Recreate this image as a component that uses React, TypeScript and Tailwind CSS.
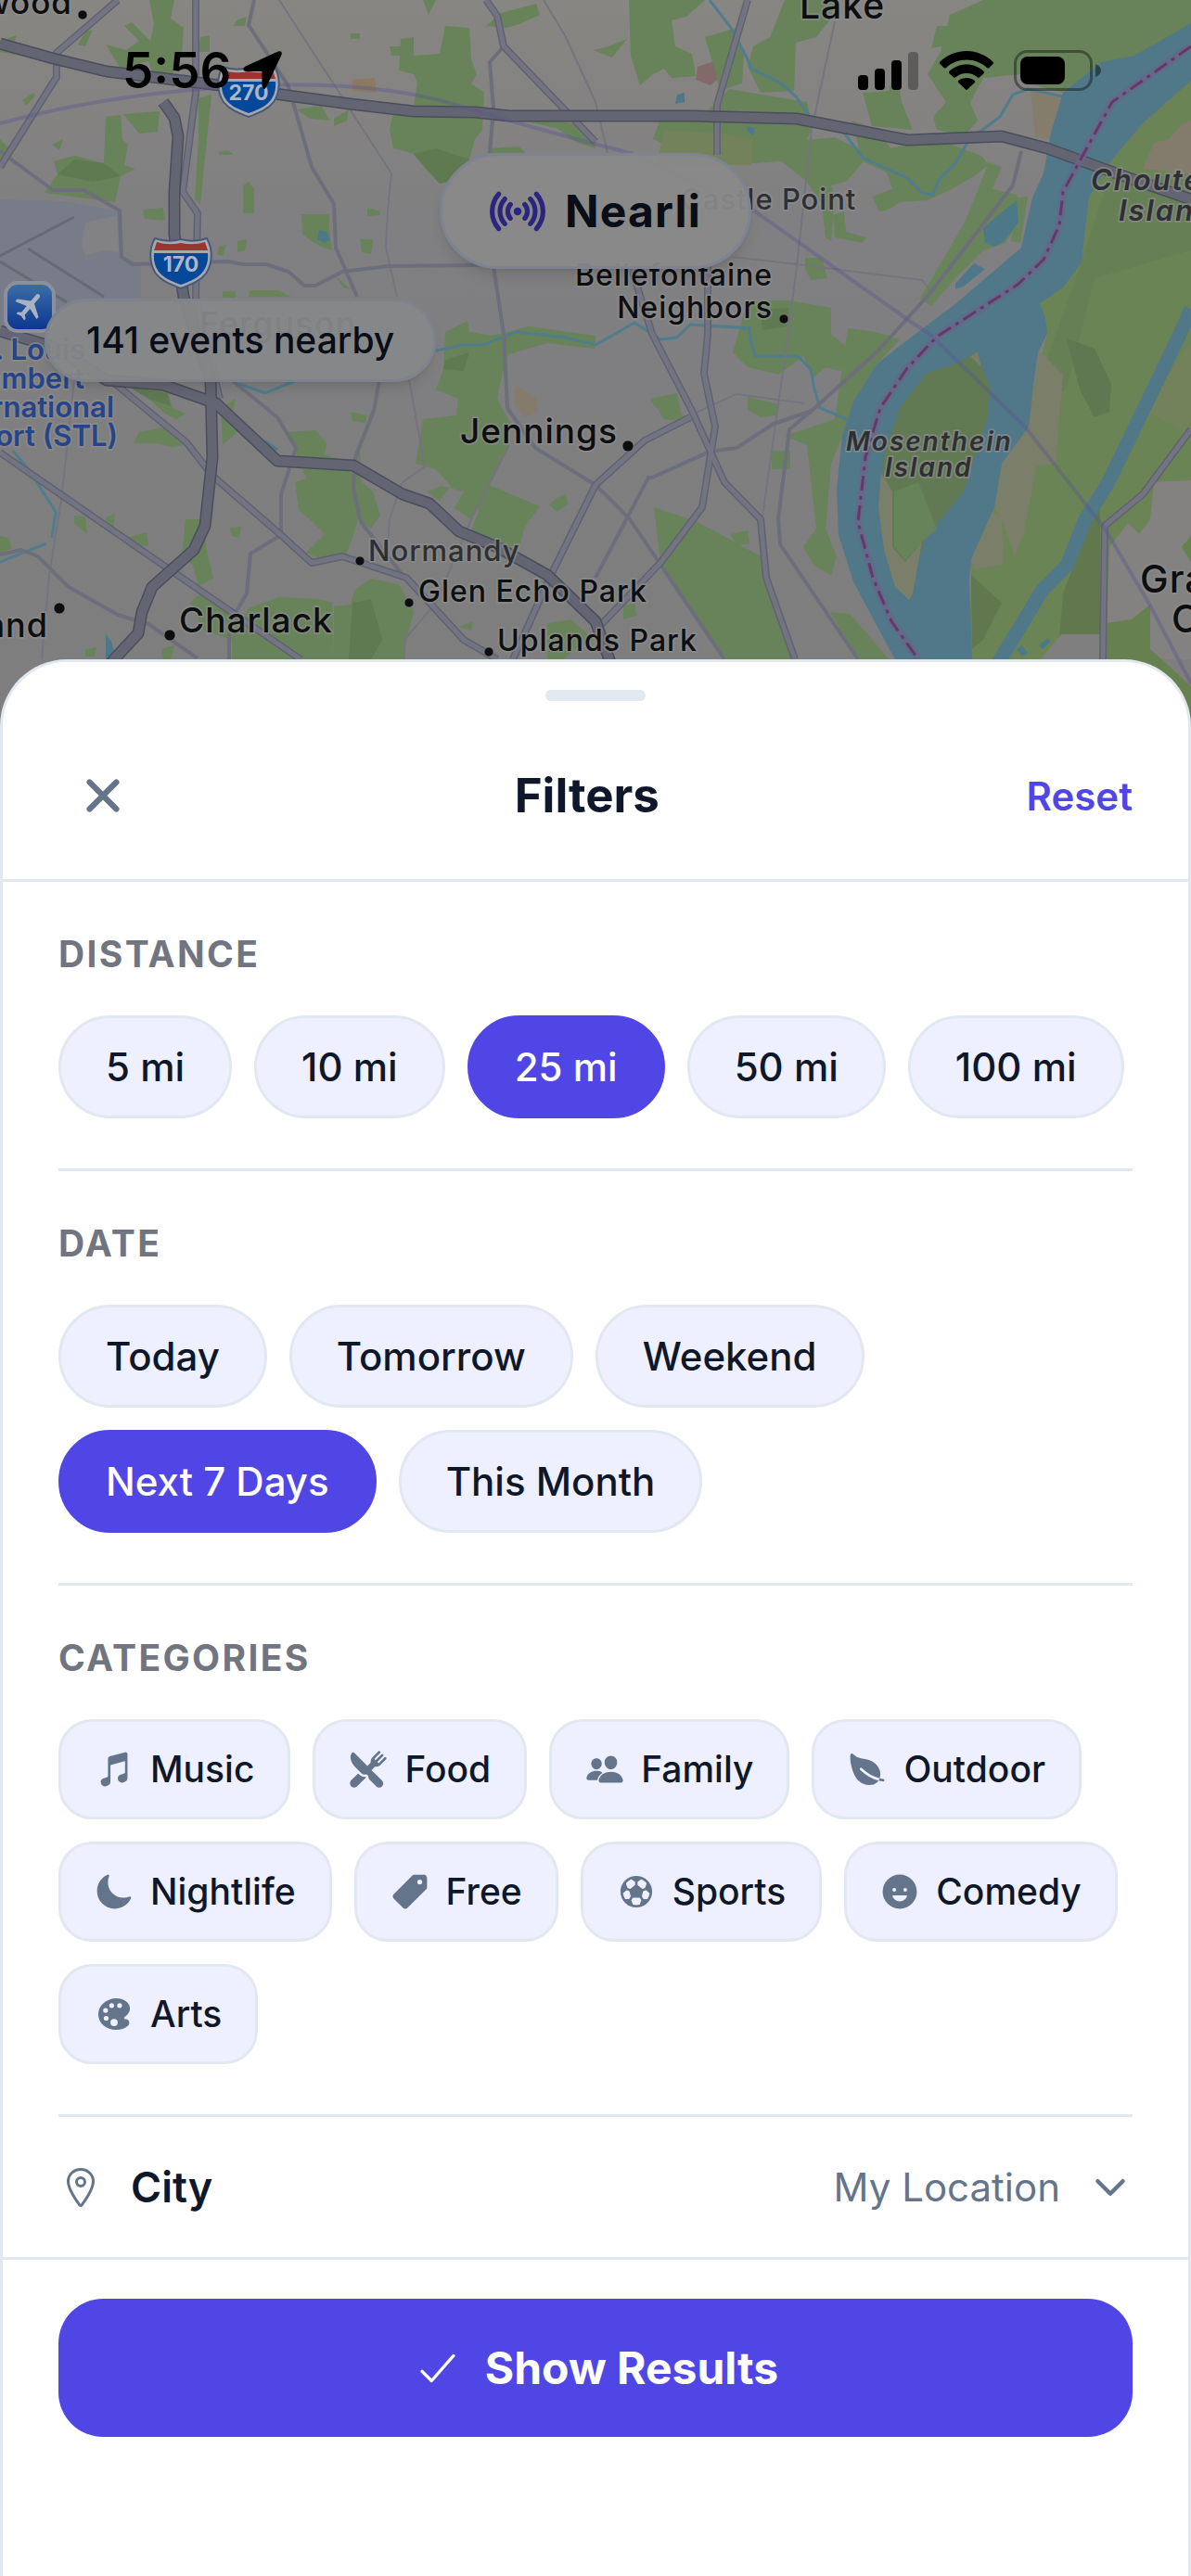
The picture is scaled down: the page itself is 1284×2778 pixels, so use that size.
import { useState } from "react";
import type { ReactNode } from "react";
import type { IconType } from "react-icons";
import {
  IoCheckmarkOutline,
  IoChevronDown,
  IoClose,
  IoColorPalette,
  IoFootball,
  IoHappy,
  IoLeaf,
  IoLocationOutline,
  IoMoon,
  IoMusicalNotes,
  IoPeople,
  IoPricetag,
  IoRadio,
  IoRestaurant,
} from "react-icons/io5";
import { MdFlight } from "react-icons/md";

const DISTANCES = ["5 mi", "10 mi", "25 mi", "50 mi", "100 mi"];
const DATES = ["Today", "Tomorrow", "Weekend", "Next 7 Days", "This Month"];
const CATEGORIES: { name: string; icon: IconType }[] = [
  { name: "Music", icon: IoMusicalNotes },
  { name: "Food", icon: IoRestaurant },
  { name: "Family", icon: IoPeople },
  { name: "Outdoor", icon: IoLeaf },
  { name: "Nightlife", icon: IoMoon },
  { name: "Free", icon: IoPricetag },
  { name: "Sports", icon: IoFootball },
  { name: "Comedy", icon: IoHappy },
  { name: "Arts", icon: IoColorPalette },
];

const HIGHWAYS = [
  "M0 47 57 63 115 77 237 92 303 102 377 112 446 120 512 121 549 125 748 125 859 128 978 151 1080 147 1129 160 1220 193 1284 215",
  "M176 110 188 127 192 147 188 207 188 253 198 320 227 410 229 493 221 567 209 593 164 633 153 660 149 683 123 711 90 760",
  "M0 357 60 375 115 410 176 415 233 435 299 497 381 502 434 533 463 543 495 573 536 590 590 620 642 670 660 720",
];

const ROADS = [
  "M127 0 61 57 61 83 0 180",
  "M211 0V100L197 207 213 230 211 320 237 430",
  "M524 0 536 17 543 50 642 153",
  "M806 0 773 113V167",
  "M763 287 763 360 759 403 771 460 757 547 712 607 642 680",
  "M680 287 703 360 746 443 781 520 820 560 826 623 857 711",
  "M0 488 152 593 324 711",
  "M123 413 201 477 229 513 303 577 336 607 369 600 438 623 500 690 536 711",
  "M744 450 695 475 642 523 594 620 553 711",
  "M1284 463 1232 533 1191 567 1189 711",
];

const STREETS = [
  "M274 0 268 27 311 93 336 180 360 220 362 267 385 320",
  "M409 410 403 443 383 493 381 527 389 563 434 620",
  "M0 163 57 205 90 205 129 227 131 277 143 285 246 282 262 285 287 285 311 293 328 308 340 308 369 293 418 287 516 286",
  "M543 50 528 67 532 117 528 165",
  "M532 287 543 360 547 440 577 483 642 523 679 560 781 711",
  "M250 410 299 450 319 483 303 533V577L270 597 266 640 247 673V711",
  "M1101 163 1092 200 1002 317 945 380 875 443 851 463 839 560 841 587 925 711",
  "M875 443 834 457 794 483 765 487 703 515 699 515 642 623",
  "M0 598 23 593 41 600 74 633 127 663 160 673 213 710",
];

const LANES = [
  "M301 0 422 187 418 227 416 267 428 320",
  "M441 410 458 503 434 520 420 560 418 590",
  "M586 0 610 40 642 110 655 165",
  "M789 277 859 285 994 302 1004 315",
  "M900 23 875 140 859 287 847 380 822 557",
  "M744 448 794 425 867 435",
  "M80 410 66 540 53 620 45 711",
  "M549 480 508 560 470 650 436 690V711",
];

const PARKS = [
  "M161 0H188L184 20 198 30 196 60 188 76 180 92 168 88 160 66 130 74 114 48 136 54 150 44 134 28 142 24 162 44 166 26Z",
  "M0 44 18 38 14 50 34 62 0 56Z",
  "M92 34 100 32 92 50 84 48Z",
  "M216 40 226 38V56H214Z",
  "M214 106 228 102 222 160 216 220 210 214 214 150Z",
  "M133 123 172 120 170 142 150 144Z",
  "M114 126 130 124 132 150 138 156 134 178 146 182 130 190 124 218 48 208 62 188 58 174 80 168 112 176Z",
  "M24 108 36 100 38 104 28 114Z",
  "M56 156 68 150 64 162Z",
  "M0 150 10 160 0 172Z",
  "M255 22 266 18 264 28 252 28Z",
  "M378 36H388V42H378Z",
  "M320 118 346 114 356 130 334 128Z",
  "M360 128 376 118 374 130 360 136Z",
  "M456 0H470L462 16Z",
  "M480 28 506 30 508 64 514 80 508 90 522 100 520 140 512 150 506 172 482 196 474 198 460 184 446 166 424 160 420 140 424 120 444 126 446 114 450 90 446 80 430 76 432 42 446 40 446 60 474 58Z",
  "M524 28 540 14 578 4 582 16 560 26 546 30Z",
  "M420 50H436V60H422Z",
  "M562 130 590 128 620 134 642 148V160L622 154 600 138Z",
  "M528 160 560 158 566 165H530Z",
  "M262 200 268 196 274 204V230H262Z",
  "M236 164 246 162 252 167H236Z",
  "M325 231H355V248L358 270 346 266 336 260 326 252Z",
  "M388 258H402L400 274 390 272Z",
  "M396 224 410 228V232L396 233Z",
  "M256 260 266 258 264 270 256 272Z",
  "M236 266 244 264 240 276 234 274Z",
  "M154 226 176 224 178 238 156 236Z",
  "M240 314H254V321H240Z",
  "M270 313H300L314 320H268Z",
  "M362 298 378 312 370 310Z",
  "M480 358 504 346 506 358 530 362 570 352 642 362V376L590 370 548 382 540 410 536 430 550 456 548 482 508 560 490 548 500 530 476 524 460 530 474 540 486 524 470 506 448 500 456 452 492 448 494 430 470 420 478 398Z",
  "M520 520 582 546 566 568 560 590 522 586 506 578 515 554Z",
  "M602 536 610 532 612 544 600 552 592 544Z",
  "M140 412 180 420 186 440 200 446 190 452 178 446 160 430Z",
  "M150 466 182 460 200 480 184 482 170 478 144 478Z",
  "M196 600 200 560H222V590L230 624 214 632 208 610Z",
  "M238 440 254 430 250 448 262 460 240 480Z",
  "M310 466 340 464 352 478 350 490 382 500 388 486 390 520 402 530 410 556 400 570 386 560 380 580 372 600 344 602 330 596 342 584 350 576 338 564 322 550 318 520 330 516Z",
  "M378 444 396 448 394 456 380 454Z",
  "M130 582 158 574 160 588 142 590Z",
  "M114 558 124 554 122 572 116 568Z",
  "M80 556 92 558 94 576 80 564Z",
  "M205 650 216 640 234 648 260 672 268 656 300 644 344 646 358 650 360 711H250V690L220 680Z",
  "M382 636 400 624 430 630 446 660 438 690 436 711H360V654L378 652Z",
  "M495 676 510 670 508 680Z",
  "M248 569 260 568 258 580 250 578Z",
  "M174 700 188 696 184 711H176Z",
  "M92 700 104 698 102 708H92Z",
  "M0 578 10 580 12 592 0 596Z",
  "M678 0H760L740 18 724 22 728 50 746 58 750 82 724 84 716 74 704 80 690 92 680 60Z",
  "M760 40 794 30 802 60 800 90 776 98 772 80Z",
  "M640 54 656 50 676 42 660 62Z",
  "M846 0H900L896 20 880 40 858 46 856 98 820 100 806 72 812 50 830 40Z",
  "M786 96 870 110 876 138 860 172 814 176H780L720 158 704 150 712 128 756 126Z",
  "M820 156 900 148 936 166 926 180 912 196 896 200 900 212 896 260 890 256 886 220 870 196Z",
  "M918 130 948 140 960 160 1010 150 1058 168 1066 178 1050 190 1026 204 1000 216 970 218 958 226 948 228 940 212 962 204 956 186 930 174Z",
  "M930 100 958 98 966 70 972 110 984 140 940 136Z",
  "M1024 16 1060 0H1110V60L1100 80 1060 84 1046 110 1054 130 1040 146 1010 140 1006 126 1020 110 1000 80 1014 56Z",
  "M1010 28 1028 28 1024 48 1004 52Z",
  "M868 278 886 278 892 300 874 302 868 290Z",
  "M898 232 910 228 912 250 934 256 930 262 900 256Z",
  "M806 324H850L896 332V360L920 380 906 400 890 396 876 408 866 384 840 404 806 396 790 380Z",
  "M914 354 944 358 970 366 945 393 920 433 908 470 896 500 890 570 902 600 896 620 878 610 866 590 880 570 870 480 846 470 870 462 900 452Z",
  "M806 428 840 436 838 448 820 450 806 442Z",
  "M832 486H852V506H832Z",
  "M700 430 730 424 734 446 746 456 716 452 708 440Z",
  "M705 547 750 562 784 580 820 600 826 623 857 711H781L712 607Z",
  "M788 576 806 572 808 586 794 588Z",
  "M895 660 916 662 932 680 958 711H925Z",
  "M672 654 684 650 686 664 672 668Z",
  "M590 672 616 668 640 690 620 700 608 711H590Z",
  "M1108 0H1284V30L1223 60 1187 67 1146 100 1130 96 1110 90Z",
];

const PONDS = [
  "M344 248 352 250 356 258 350 262 342 258Z",
  "M286 474 300 484 298 486 288 484Z",
  "M114 684 120 692 126 711H114Z",
  "M730 102 738 100 738 110 728 112Z",
  "M805 136 814 138 812 146 806 142Z",
  "M1060 246 1074 234 1096 216 1098 240 1082 260 1072 266 1062 262Z",
  "M1030 306 1050 284 1062 290 1040 308 1030 312Z",
  "M1096 700 1102 696 1108 704 1102 708Z",
  "M1120 696 1130 688 1132 692 1124 700Z",
];

const CREEKS = [
  "M765 0 788 30 804 60 810 74 842 90 858 104 872 124",
  "M909 142 930 170 978 192 994 208 1006 210 1012 194 1030 176 1044 152 1062 138 1078 126 1092 102 1108 96 1146 104",
  "M470 378 500 372 520 372 556 358 610 364 642 372 660 362 684 348 712 366 730 364 744 350 808 354 810 370 814 384 840 384 860 384 874 398 878 420 884 440 915 453",
  "M258 414 286 424 320 410",
  "M14 486 32 508 60 552 56 580M0 606 50 586",
];

const STATE_LINE =
  "M1284 50 1199 110 1166 170 1146 207 1142 243 1125 280 1097 307 1035 347 1010 363 978 397 949 440 933 493 925 563 941 623 961 670 990 711";

type LabelProps = {
  x: number;
  y: number;
  size: number;
  children: ReactNode;
  end?: boolean;
  tone?: "dark" | "soft" | "blue";
  italic?: boolean;
};

const TONES = { dark: "#0d0e10", soft: "#2e2f33", blue: "#254489" };

function MapLabel({ x, y, size, children, end, tone = "dark", italic }: LabelProps) {
  return (
    <text
      x={x}
      y={y}
      fontSize={size}
      fontWeight={italic || tone === "blue" ? 600 : 500}
      fontStyle={italic ? "italic" : "normal"}
      textAnchor={end ? "end" : "start"}
      letterSpacing={tone === "blue" ? 0 : italic ? 2 : 1}
      fill={TONES[tone]}
      stroke="#8c8c8c"
      strokeWidth="4"
      strokeOpacity="0.7"
      strokeLinejoin="round"
      paintOrder="stroke"
    >
      {children}
    </text>
  );
}

function Shield({ x, y, label }: { x: number; y: number; label: string }) {
  return (
    <g transform={`translate(${x} ${y})`}>
      <path
        d="M4 0Q18 5 32 1Q46 5 60 0C67 12 66 28 59 38C52 47 42 50 32 54C22 50 12 47 5 38C-2 28 -3 12 4 0Z"
        fill="#a5a8ad"
        stroke="#47587a"
        strokeWidth="2"
      />
      <path d="M6 4Q18 8 32 5Q46 8 58 4L61 13H3Z" fill="#9c342f" />
      <path d="M3 16H61C62 27 58 35 52 40C46 45 40 47 32 50C24 47 18 45 12 40C6 35 2 27 3 16Z" fill="#05489a" />
      <text x="32" y="36" fontSize="23" fontWeight="700" textAnchor="middle" fill="#aeb6c4">
        {label}
      </text>
    </g>
  );
}

// Map tiles behind the sheet, already dimmed by the modal backdrop
function MapBackdrop() {
  return (
    <svg
      className="absolute inset-x-0 top-0 h-[820px] w-full"
      viewBox="0 0 1284 820"
      preserveAspectRatio="xMidYMin slice"
      fontFamily="Inter, sans-serif"
      fill="none"
      aria-hidden="true"
    >
      <defs>
        <linearGradient id="land" x1="0" y1="0" x2="0" y2="1">
          <stop offset="0" stopColor="#888682" />
          <stop offset="0.3" stopColor="#807f81" />
          <stop offset="1" stopColor="#7e7e7e" />
        </linearGradient>
        <linearGradient id="airport" x1="0" y1="0" x2="0" y2="1">
          <stop offset="0" stopColor="#3d6fa8" />
          <stop offset="1" stopColor="#0a3590" />
        </linearGradient>
      </defs>
      <rect width="1284" height="820" fill="url(#land)" />

      <path d="M0 215 70 217 129 228 131 277 152 285V320L120 352H0Z" fill="#777c88" />
      <path d="M92 240 126 232 128 272 110 270 92 276 88 262Z" fill="#828183" />
      <path d="M0 276 80 234M30 268 112 320M0 282 72 326" stroke="#676a74" strokeWidth="3" />
      <path d="M380 86 404 84 406 100 380 98Z" fill="#8a7a62" />
      <path d="M478 128 496 128 506 150 496 156 474 148Z" fill="#83736f" />
      <path d="M752 72 770 66 776 84 766 92 750 86Z" fill="#83696a" />
      <path d="M556 416 578 428 580 444 566 450 554 436Z" fill="#857a6c" />

      {/* East bank and island farmland */}
      <path
        d="M1284 85 1232 133 1195 177 1174 213 1166 283 1121 327 1129 360 1113 423 1080 500 1047 603 1045 711H1284Z"
        fill="#6b8456"
      />
      <path d="M1110 0H1284V40L1223 60 1187 67 1120 50Z" fill="#73825a" />
      <path d="M1196 190 1240 192 1284 186V270L1180 300 1150 420 1110 440 1166 283Z" fill="#667f55" />
      <path d="M1284 130 1274 134 1260 150 1244 154 1232 182 1284 188Z" fill="#837c6c" />
      <path d="M1150 365 1180 376 1198 414 1196 444 1180 450 1164 420Z" fill="#5f7852" />
      <path d="M1262 400 1284 370V470L1236 444Z" fill="#73825a" />
      <path d="M1120 378 1146 404 1138 500 1118 502 1104 574 1094 600 1080 560 1072 547 1080 500 1109 460Z" fill="#7b7f69" />
      <path d="M1068 550 1080 558 1082 608 1050 614 1047 603Z" fill="#7b7f69" />
      <path d="M1111 97 1146 104 1133 150 1116 148Z" fill="#857d6c" />
      <path d="M1186 536 1146 640 1140 711H1186Z" fill="#61784f" />
      <path d="M1047 620 1080 650 1060 690 1048 700Z" fill="#61784f" />
      <path d="M1284 518 1244 520 1240 560 1228 576 1216 564 1196 590 1192 711H1284Z" fill="#838281" />
      <path d="M1284 578 1274 590 1284 606ZM1192 672 1220 668 1240 652V700L1284 740V820H1192Z" fill="#67804f" />
      <path d="M1144 684H1186V711H1122Z" fill="#807f7f" />
      <path d="M1066 175 1080 180 1070 204 1096 210 1104 230 1084 262 1060 270 1030 300 1004 330 992 322 1040 240Z" fill="#69845a" />
      <path d="M1094 214 1108 212 1100 262 1090 260Z" fill="#69845a" />

      <g fill="#68825a">
        {PARKS.map((d) => (
          <path key={d} d={d} />
        ))}
      </g>
      <g fill="#5f7951">
        <path d="M446 166 470 160 506 172 482 196 474 198Z" />
        <path d="M80 172 112 176 130 190 100 196 62 188Z" />
        <path d="M480 388 506 380 500 400 478 398Z" />
        <path d="M380 650 400 646 412 690 400 711H376Z" />
        <path d="M140 418 180 424 184 438 160 430Z" />
        <path d="M820 334 850 332 848 352 822 356Z" />
      </g>
      <path d="M716 140 780 144 812 150 810 178H708Z" fill="#73825a" />

      {/* River */}
      <path
        d="M1284 25 1223 60 1187 67 1146 100 1133 143 1125 187 1113 213 1101 267 1031 327 961 380 945 393 920 433 908 470 902 527 904 577 920 627 941 667 965 711H1048L1045 627 1047 603 1072 547 1080 500 1109 460 1113 423 1119 380 1129 360 1127 343 1121 327 1146 310 1166 283 1174 213 1195 177 1232 133 1284 87Z"
        fill="#507888"
      />
      <path
        d="M1051 380 1068 417 1064 453 1039 530 998 580 990 603 982 647 965 633 953 593 947 547 953 490 970 440 998 403 1035 390Z"
        fill="#617a53"
      />
      <path d="M950 510 962 530 962 590 976 606 994 584 984 640 980 647 965 633 953 593 947 547Z" fill="#7b7f69" />
      <path d="M964 530 990 520 1010 570 994 584 976 604 964 590Z" fill="#67835a" />
      <path d="M1046 384 1054 380 1058 396Z" fill="#7b7f69" />
      <path d="M1284 333 1274 356 1195 520 1170 560 1150 610 1124 636 1076 715" stroke="#507888" strokeWidth="15" />
      <g fill="#4c788a">
        {PONDS.map((d) => (
          <path key={d} d={d} />
        ))}
      </g>
      <g stroke="#4f7d8d" strokeWidth="3">
        {CREEKS.map((d) => (
          <path key={d} d={d} />
        ))}
      </g>

      <g strokeLinejoin="round">
        <g stroke="#74747f" strokeWidth="2">
          {LANES.map((d) => (
            <path key={d} d={d} />
          ))}
        </g>
        <g stroke="#6d6e7b" strokeWidth="4">
          {STREETS.map((d) => (
            <path key={d} d={d} />
          ))}
        </g>
        <g stroke="#606171" strokeWidth="8">
          {ROADS.map((d) => (
            <path key={d} d={d} />
          ))}
        </g>
        <g stroke="#737481" strokeWidth="5">
          {ROADS.map((d) => (
            <path key={d} d={d} />
          ))}
        </g>
        <g stroke="#4b4d5c" strokeWidth="13">
          {HIGHWAYS.map((d) => (
            <path key={d} d={d} />
          ))}
        </g>
        <g stroke="#646572" strokeWidth="10">
          {HIGHWAYS.map((d) => (
            <path key={d} d={d} />
          ))}
        </g>
      </g>

      <path
        d="M0 133Q123 100 262 93T491 113 679 165L814 228 982 347 1002 360 1105 460 1191 570 1240 653 1284 737"
        stroke="#5a5590"
        strokeOpacity="0.4"
        strokeWidth="4"
      />
      <g strokeLinejoin="round">
        <path d={STATE_LINE} stroke="#6a6488" strokeOpacity="0.75" strokeWidth="8" />
        <path d={STATE_LINE} stroke="#66376a" strokeWidth="3" strokeDasharray="16 6 4 6" />
      </g>

      <MapLabel x={78} y={15} size={35} end>wood</MapLabel>
      <MapLabel x={862} y={20} size={39}>Lake</MapLabel>
      <MapLabel x={734} y={226} size={31} tone="soft">Castle Point</MapLabel>
      <MapLabel x={833} y={308} size={32} end>Bellefontaine</MapLabel>
      <MapLabel x={833} y={343} size={32} end>Neighbors</MapLabel>
      <MapLabel x={1176} y={205} size={31} tone="soft" italic>Chouteau</MapLabel>
      <MapLabel x={1206} y={238} size={31} tone="soft" italic>Island</MapLabel>
      <MapLabel x={215} y={362} size={36} tone="soft">Ferguson</MapLabel>
      <MapLabel x={496} y={478} size={37}>Jennings</MapLabel>
      <MapLabel x={912} y={486} size={28} tone="soft" italic>Mosenthein</MapLabel>
      <MapLabel x={954} y={514} size={28} tone="soft" italic>Island</MapLabel>
      <MapLabel x={397} y={605} size={31} tone="soft">Normandy</MapLabel>
      <MapLabel x={451} y={649} size={32}>Glen Echo Park</MapLabel>
      <MapLabel x={536} y={702} size={32}>Uplands Park</MapLabel>
      <MapLabel x={193} y={682} size={37}>Charlack</MapLabel>
      <MapLabel x={52} y={687} size={36} end>Overland</MapLabel>
      <MapLabel x={1229} y={639} size={41}>Granite</MapLabel>
      <MapLabel x={1263} y={682} size={41}>City</MapLabel>
      <MapLabel x={92} y={388} size={31} tone="blue" end>St. Louis</MapLabel>
      <MapLabel x={91} y={419} size={31} tone="blue" end>Lambert</MapLabel>
      <MapLabel x={123} y={450} size={31} tone="blue" end>International</MapLabel>
      <MapLabel x={127} y={481} size={31} tone="blue" end>Airport (STL)</MapLabel>

      <g fill="#0d0e10" stroke="#8c8c8c" strokeOpacity="0.6" strokeWidth="1">
        <circle cx="89" cy="16" r="5" />
        <circle cx="845" cy="344" r="5" />
        <circle cx="677" cy="481" r="6" />
        <circle cx="388" cy="605" r="5" />
        <circle cx="441" cy="650" r="5" />
        <circle cx="527" cy="703" r="5" />
        <circle cx="183" cy="685" r="6" />
        <circle cx="64" cy="656" r="6" />
      </g>

      <Shield x={236} y={72} label="270" />
      <Shield x={163} y={257} label="170" />
      <rect x="6" y="305" width="52" height="52" rx="13" fill="url(#airport)" stroke="#8c9098" strokeWidth="4" />
      <g transform="rotate(40 32 331)" color="#aab2c0">
        <MdFlight x="13" y="311" size={38} />
      </g>
    </svg>
  );
}

function StatusBar() {
  return (
    <div className="flex h-11 items-center justify-between pr-[96px] pl-[132px] text-black">
      <div className="flex items-center gap-3">
        <span className="text-[53px] leading-none font-semibold">5:56</span>
        <svg className="size-11" viewBox="0 0 42 42" fill="currentColor" aria-hidden="true">
          <path d="M37 1.500Q42 0 40.500 5L25 38Q22 43 20.500 37V22H4Q-1 21 3 17Z" />
        </svg>
      </div>
      <div className="flex items-center gap-[22px]">
        <svg className="h-[42px] w-[66px]" viewBox="0 0 66 42" fill="currentColor" aria-hidden="true">
          <rect x="0" y="26" width="11" height="16" rx="4" />
          <rect x="18" y="19" width="11" height="23" rx="4" />
          <rect x="36" y="10" width="11" height="32" rx="4" />
          <rect x="54" y="1" width="11" height="41" rx="4" opacity="0.3" />
        </svg>
        <svg className="h-[42px] w-[58px]" viewBox="0 0 58 42" fill="currentColor" aria-hidden="true">
          <path d="M29 0C40 0 50 4.500 57.500 11.500Q58.500 12.800 57.500 14L53.500 18Q52.300 19 51 18C45 12.500 37.500 9.500 29 9.500S13 12.500 7 18Q5.700 19 4.500 18L.5 14Q-.5 12.800 .5 11.500C8 4.500 18 0 29 0Z" />
          <path d="M29 14.500C36 14.500 42.500 17.200 47.500 21.700Q48.600 23 47.500 24.200L43.200 28.300Q42 29.300 40.800 28.300C37.500 25.500 33.500 24 29 24S20.500 25.500 17.200 28.300Q16 29.300 14.800 28.300L10.500 24.200Q9.400 23 10.500 21.700C15.500 17.200 22 14.500 29 14.500Z" />
          <path d="M29 29C32.300 29 35.200 30 37.500 31.800Q38.700 33 37.500 34.200L30.200 41.300Q29 42.300 27.800 41.300L20.500 34.200Q19.300 33 20.500 31.800C22.800 30 25.700 29 29 29Z" />
        </svg>
        <svg className="h-11 w-[95px]" viewBox="0 0 95 44" aria-hidden="true">
          <rect x="1.500" y="1.500" width="82" height="41" rx="13" fill="none" stroke="#000" strokeOpacity="0.38" strokeWidth="3" />
          <rect x="7" y="7" width="48" height="30" rx="8" />
          <path d="M88 15Q94 18 94 22T88 29Z" fillOpacity="0.45" />
        </svg>
      </div>
    </div>
  );
}

function Section({ title, children }: { title: string; children: ReactNode }) {
  return (
    <section className="border-b-3 border-[#e2e8f0] py-[54px]">
      <h2 className="mb-[42px] text-[39px] leading-[48px] font-bold tracking-[0.06em] text-[#71757f] uppercase">
        {title}
      </h2>
      <div className="flex flex-wrap gap-6">{children}</div>
    </section>
  );
}

interface ChipProps {
  label: string;
  selected: boolean;
  onClick: () => void;
}

function Chip({ label, selected, onClick }: ChipProps) {
  return (
    <button
      type="button"
      aria-pressed={selected}
      onClick={onClick}
      className={`h-[111px] rounded-full border-3 px-12 text-[42px] leading-[51px] font-medium ${
        selected
          ? "border-[#4f46e5] bg-[#4f46e5] text-white"
          : "border-[#e2e8f0] bg-[#eef0ff] text-[#0f172a]"
      }`}
    >
      {label}
    </button>
  );
}

function CategoryChip({ label, selected, onClick, icon: Icon }: ChipProps & { icon: IconType }) {
  return (
    <button
      type="button"
      aria-pressed={selected}
      onClick={onClick}
      className={`flex h-[108px] items-center gap-[18px] rounded-[36px] border-3 px-9 text-[39px] leading-[48px] font-medium ${
        selected
          ? "border-[#4f46e5] bg-[#4f46e5] text-white"
          : "border-[#e2e8f0] bg-[#eef0ff] text-[#0f172a]"
      }`}
    >
      <Icon className={`size-[42px] ${selected ? "text-white" : "text-[#64748b]"}`} />
      {label}
    </button>
  );
}

export default function App() {
  const [distance, setDistance] = useState("25 mi");
  const [date, setDate] = useState("Next 7 Days");
  const [categories, setCategories] = useState<string[]>([]);

  const toggleCategory = (name: string) =>
    setCategories((prev) =>
      prev.includes(name) ? prev.filter((c) => c !== name) : [...prev, name],
    );

  const reset = () => {
    setDistance("25 mi");
    setDate("Next 7 Days");
    setCategories([]);
  };

  return (
    <div className="relative flex min-h-screen flex-col overflow-hidden bg-[#808080] font-['Inter',sans-serif]">
      <MapBackdrop />

      <header className="relative flex flex-col pt-[54px] pb-[299px]">
        <StatusBar />
        <div className="mt-[67px] flex h-[125px] items-center gap-[21px] self-center rounded-full border-3 border-[#7d8390] bg-[#8a8a8b]/93 px-[51px] shadow-lg">
          <IoRadio className="size-[60px] text-[#2b257d]" />
          <span className="text-[48px] leading-[58px] font-bold tracking-wide text-[#080d18]">Nearli</span>
        </div>
        <div className="mt-8 ml-12 flex h-[90px] items-center self-start rounded-full border-3 border-[#7d828c] bg-[#878889]/93 px-[42px] text-[39px] leading-[48px] font-medium text-[#080d18] shadow-lg">
          141 events nearby
        </div>
      </header>

      <main className="relative flex flex-1 flex-col rounded-t-[72px] border-3 border-b-0 border-[#e2e8f0] bg-white pt-[30px]">
        <div className="h-3 w-[108px] self-center rounded-full bg-[#e2e8f0]" />

        <div className="flex items-center justify-between border-b-3 border-[#e2e8f0] px-[60px] pt-[54px] pb-[42px]">
          <button type="button" aria-label="Close" className="flex size-24 items-center justify-center">
            <IoClose className="size-[66px] text-[#64748b]" />
          </button>
          <h1 className="text-[51px] leading-[60px] font-bold text-[#0f172a]">Filters</h1>
          <button
            type="button"
            onClick={reset}
            className="text-[42px] leading-[51px] font-semibold text-[#4f46e5]"
          >
            Reset
          </button>
        </div>

        <div className="px-[60px]">
          <Section title="Distance">
            {DISTANCES.map((d) => (
              <Chip key={d} label={d} selected={d === distance} onClick={() => setDistance(d)} />
            ))}
          </Section>

          <Section title="Date">
            {DATES.map((d) => (
              <Chip key={d} label={d} selected={d === date} onClick={() => setDate(d)} />
            ))}
          </Section>

          <Section title="Categories">
            {CATEGORIES.map(({ name, icon }) => (
              <CategoryChip
                key={name}
                label={name}
                icon={icon}
                selected={categories.includes(name)}
                onClick={() => toggleCategory(name)}
              />
            ))}
          </Section>

          {/* City picker */}
          <div className="flex items-center py-[50px] text-[42px] leading-[51px]">
            <IoLocationOutline className="size-12 text-[#64748b]" />
            <label htmlFor="city" className="ml-[30px] text-[45px] font-semibold text-[#0f172a]">
              City
            </label>
            <div className="relative ml-auto flex items-center">
              <select
                id="city"
                defaultValue="My Location"
                className="field-sizing-content appearance-none bg-transparent pr-[78px] text-[#64748b]"
              >
                <option>My Location</option>
              </select>
              <IoChevronDown className="pointer-events-none absolute right-0 size-12 text-[#64748b]" />
            </div>
          </div>
        </div>

        <footer className="border-t-3 border-[#e2e8f0] px-[60px] pt-[42px] pb-[60px]">
          <button
            type="button"
            className="flex h-[149px] w-full items-center justify-center gap-6 rounded-[48px] bg-[#4f46e5] text-[48px] leading-[60px] font-bold text-white"
          >
            <IoCheckmarkOutline className="size-[54px]" />
            Show Results
          </button>
        </footer>
      </main>
    </div>
  );
}
